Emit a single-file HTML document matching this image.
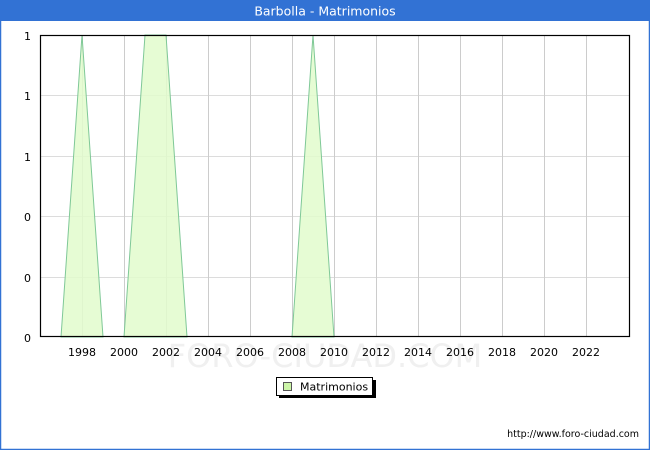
<!DOCTYPE html>
<html><head><meta charset="utf-8"><style>
body{margin:0;width:650px;height:450px;overflow:hidden;background:#fff;font-family:"DejaVu Sans","Liberation Sans",sans-serif;}
</style></head><body>
<svg width="650" height="450" xmlns="http://www.w3.org/2000/svg" style="position:absolute;left:0;top:0">
<rect x="0" y="0" width="650" height="450" fill="#fff"/>
<rect x="0.5" y="0.5" width="649" height="449" fill="none" stroke="#3272d4" stroke-width="1.5"/>
<rect x="0" y="0" width="650" height="21" fill="#3272d4"/>
<text x="325" y="15.5" fill="#fff" font-size="12.5" text-anchor="middle" font-family="DejaVu Sans, Liberation Sans, sans-serif">Barbolla - Matrimonios</text>
<text x="325" y="367" fill="#f0f0f0" font-size="32" text-anchor="middle" font-family="DejaVu Sans, sans-serif">FORO-CIUDAD.COM</text>
<g stroke="#dcdcdc" stroke-width="1">
<line x1="40" y1="95.5" x2="630" y2="95.5"/>
<line x1="40" y1="156.5" x2="630" y2="156.5"/>
<line x1="40" y1="216.5" x2="630" y2="216.5"/>
<line x1="40" y1="277.5" x2="630" y2="277.5"/>
</g>
<g stroke="#cccccc" stroke-width="1">
<line x1="82.5" y1="35" x2="82.5" y2="337"/><line x1="124.5" y1="35" x2="124.5" y2="337"/>
<line x1="166.5" y1="35" x2="166.5" y2="337"/><line x1="208.5" y1="35" x2="208.5" y2="337"/>
<line x1="250.5" y1="35" x2="250.5" y2="337"/><line x1="292.5" y1="35" x2="292.5" y2="337"/>
<line x1="334.5" y1="35" x2="334.5" y2="337"/><line x1="376.5" y1="35" x2="376.5" y2="337"/>
<line x1="418.5" y1="35" x2="418.5" y2="337"/><line x1="460.5" y1="35" x2="460.5" y2="337"/>
<line x1="502.5" y1="35" x2="502.5" y2="337"/><line x1="544.5" y1="35" x2="544.5" y2="337"/>
<line x1="586.5" y1="35" x2="586.5" y2="337"/>
</g>
<g fill="#e2fccc" fill-opacity="0.85" stroke="#7fc897" stroke-width="1">
<polygon points="61,337 82,35 103,337"/>
<polygon points="124,337 145,35 166,35 187,337"/>
<polygon points="292,337 313,35 334,337"/>
</g>
<rect x="40.5" y="35.5" width="589" height="301" fill="none" stroke="#000" stroke-width="1.2"/>
<g font-size="11" fill="#000" text-anchor="end">
<text x="31" y="40">1</text><text x="31" y="100">1</text><text x="31" y="161">1</text>
<text x="31" y="221">0</text><text x="31" y="282">0</text><text x="31" y="342">0</text>
</g>
<g font-size="11" fill="#000" text-anchor="middle">
<text x="82" y="356">1998</text><text x="124" y="356">2000</text><text x="166" y="356">2002</text>
<text x="208" y="356">2004</text><text x="250" y="356">2006</text><text x="292" y="356">2008</text>
<text x="334" y="356">2010</text><text x="376" y="356">2012</text><text x="418" y="356">2014</text>
<text x="460" y="356">2016</text><text x="502" y="356">2018</text><text x="544" y="356">2020</text>
<text x="586" y="356">2022</text>
</g>
<rect x="279" y="380" width="97" height="18" fill="#000"/>
<rect x="276.5" y="377.5" width="96" height="18" fill="#fff" stroke="#000"/>
<rect x="283.5" y="382.5" width="8" height="8" fill="#ccf5a8" stroke="#555"/>
<text x="300" y="390.5" font-size="11" fill="#000">Matrimonios</text>
<text x="639" y="437" font-size="9.5" fill="#000" text-anchor="end">http://www.foro-ciudad.com</text>
</svg>
</body></html>
